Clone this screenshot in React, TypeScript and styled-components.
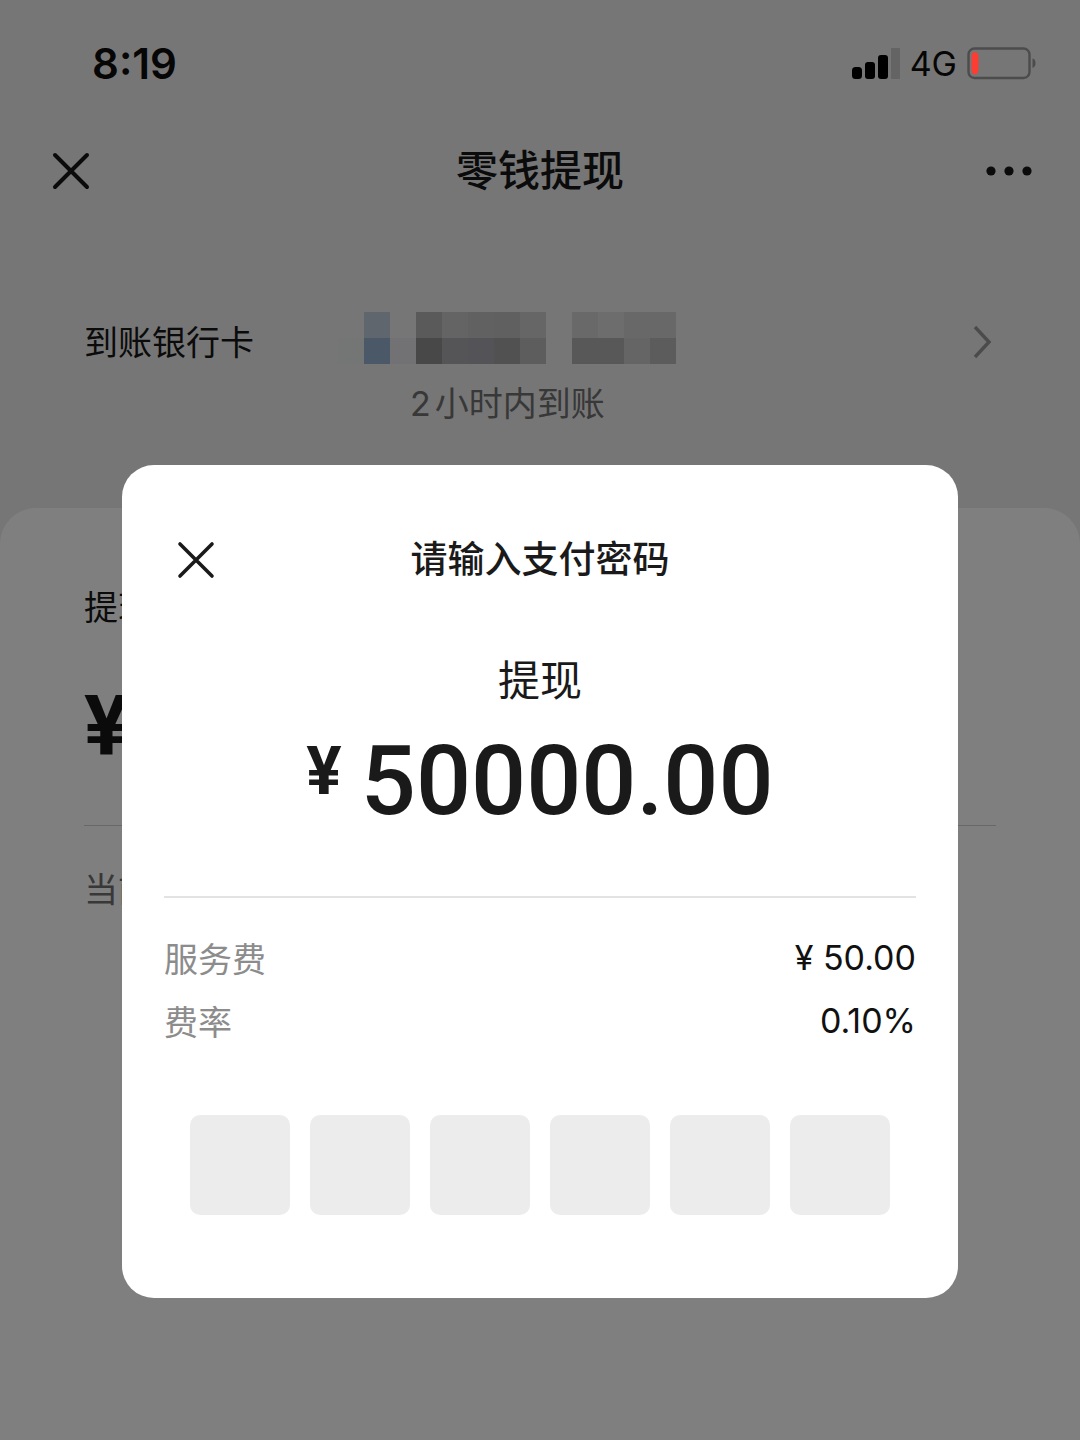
import React from "react";
import styled, { createGlobalStyle } from "styled-components";

const uiFont = `Inter, "Noto Sans CJK SC", sans-serif`;
const numberFont = `Roboto, "Noto Sans CJK SC", sans-serif`;

const GlobalStyle = createGlobalStyle`
  *, *::before, *::after { box-sizing: border-box; }
  body { margin: 0; background: #ededed; }
`;

const Page = styled.div`
  position: relative;
  display: flex;
  flex-direction: column;
  min-height: 100vh;
  background: #ededed;
  color: #161616;
  font-family: ${uiFont};
  font-size: 34px;
  line-height: 60px;
`;

/* The status bar belongs to the system and stays above the dimmed page. */
const StatusBar = styled.header`
  position: relative;
  z-index: 2;
  display: flex;
  align-items: center;
  justify-content: space-between;
  height: 128px;
  padding: 0 44px 0 92px;
  color: #060606;
`;

const Clock = styled.time`
  font-size: 42px;
  font-weight: 600;
`;

const StatusIcons = styled.div`
  display: flex;
  align-items: center;
  gap: 10px;
`;

const NavBar = styled.nav`
  display: grid;
  grid-template-columns: 60px 1fr 60px;
  align-items: center;
  height: 86px;
  padding: 0 41px;
`;

const IconButton = styled.button`
  display: grid;
  place-items: center;
  width: 60px;
  height: 60px;
  padding: 0;
  border: 0;
  background: none;
  color: inherit;
`;

const NavTitle = styled.h1`
  margin: 0;
  font-size: 42px;
  font-weight: 500;
  text-align: center;
`;

const BankSection = styled.section`
  display: grid;
  grid-template-columns: 254px 1fr 60px;
  padding: 98px 68px 0 84px;
  height: 294px;
`;

const BankLabel = styled.span`
  line-height: 62px;
`;

const Mosaic = styled.div`
  display: grid;
  grid-template-columns: repeat(13, 26px);
  grid-auto-rows: 26px;
`;

const MosaicCell = styled.span<{ $tone: string }>`
  background: ${(p) => p.$tone};
`;

const ArrivalTime = styled.p`
  display: flex;
  gap: 4px;
  margin: 10px 0 0;
  padding-left: 72px;
  color: #707070;
`;

const Sheet = styled.section`
  flex: 1;
  padding: 70px 84px 0;
  border-radius: 36px 36px 0 0;
  background: #fff;
`;

const SheetLabel = styled.p`
  margin: 0;
`;

const SheetAmount = styled.p`
  margin: 39px 0 0;
  padding-bottom: 48px;
  border-bottom: 1px solid #d0d0d0;
  font-family: ${numberFont};
  font-size: 84px;
  font-weight: 700;
  line-height: 100px;
`;

const SheetBalance = styled.p`
  margin: 34px 0 0;
  color: #707070;
`;

const Backdrop = styled.div`
  position: absolute;
  inset: 0;
  z-index: 1;
  padding: 465px 122px 0;
  background: rgba(0, 0, 0, 0.5);
`;

const Dialog = styled.div`
  padding: 64px 42px 83px;
  border-radius: 32px;
  background: #fff;
  color: #1a1a1a;
`;

const DialogHeader = styled.div`
  display: grid;
  grid-template-columns: 60px 1fr 60px;
  align-items: center;
  padding: 0 2px;
`;

const DialogTitle = styled.h2`
  margin: 0;
  font-size: 37px;
  font-weight: 500;
  line-height: 62px;
  text-align: center;
`;

const Purpose = styled.p`
  margin: 60px 0 0;
  font-size: 42px;
  text-align: center;
`;

const Amount = styled.p`
  display: flex;
  align-items: flex-start;
  justify-content: center;
  gap: 19px;
  margin: 20px 0 0;
  padding-bottom: 65px;
  border-bottom: 2px solid #e3e3e3;
  font-family: ${numberFont};
  font-size: 97px;
  font-weight: 500;
  line-height: 100px;
`;

const Currency = styled.span`
  font-size: 66px;
  font-weight: 700;
  line-height: 82px;
`;

const FeeList = styled.dl`
  margin: 30px 0 0;
`;

const FeeRow = styled.div`
  display: flex;
  justify-content: space-between;
  line-height: 63px;
`;

const FeeName = styled.dt`
  color: #8c8c8c;
`;

const FeeValue = styled.dd`
  margin: 0;
  color: #111;
  line-height: 60px;
`;

const PinFields = styled.div`
  display: grid;
  grid-template-columns: repeat(6, 1fr);
  gap: 20px;
  margin: 61px 26px 0;
`;

const PinInput = styled.input`
  width: 100%;
  aspect-ratio: 1;
  padding: 0;
  border: 0;
  border-radius: 10px;
  background: #ececec;
  font-size: 42px;
  text-align: center;
`;

const mosaicTones = [
  "transparent", "#c0ccda", "transparent", "#b4b4b4", "#c8c8c8", "#c2c2c2", "#c0c0c0", "#cccccc", "transparent", "#d2d2d2", "#dadada", "#d0d0d0", "#d0d0d0",
  "#e8ecea", "#96b0d0", "#e4e4e8", "#909090", "#aaaaae", "#a8a8b0", "#a2a2a2", "#bababa", "transparent", "#b0b0b0", "#b0b0b0", "#cacaca", "#b8b8b8",
];

const CloseIcon = ({ width = 4 }: { width?: number }) => (
  <svg width="38" height="38" viewBox="0 0 38 38" fill="none" stroke="currentColor" strokeWidth={width} strokeLinecap="round" aria-hidden="true">
    <path d="M3 3 35 35M35 3 3 35" />
  </svg>
);

const SignalIcon = () => (
  <svg width="48" height="32" viewBox="0 0 48 32" aria-hidden="true">
    <rect x="0" y="19" width="10" height="12" rx="3.5" />
    <rect x="13" y="14" width="10" height="17" rx="3" />
    <rect x="26" y="7" width="10" height="24" rx="3" />
    <rect x="39" y="0" width="9" height="31" rx="1" fill="#646464" />
  </svg>
);

const BatteryIcon = () => (
  <svg width="69" height="34" viewBox="0 0 69 34" aria-hidden="true">
    <rect x="1.5" y="1.5" width="61" height="29.5" rx="6" fill="none" stroke="#4c4c4c" strokeWidth="2.4" />
    <path d="M8 5Q11.500 5 11.500 11V21Q11.500 27.500 8 27.500Q4.500 27.500 4.500 22V10Q4.500 5 8 5Z" fill="#fb3d33" />
    <path d="M65.500 11.500Q68.500 12 68.500 16T65.500 21Z" fill="#4c4c4c" />
  </svg>
);

const fees = [
  { name: "服务费", value: "¥ 50.00" },
  { name: "费率", value: "0.10%" },
];

export default function App() {
  return (
    <>
      <GlobalStyle />
      <Page>
        <StatusBar>
          <Clock>8:19</Clock>
          <StatusIcons>
            <SignalIcon />
            <span>4G</span>
            <BatteryIcon />
          </StatusIcons>
        </StatusBar>

        <NavBar>
          <IconButton type="button" aria-label="关闭">
            <CloseIcon />
          </IconButton>
          <NavTitle>零钱提现</NavTitle>
          <IconButton type="button" aria-label="更多">
            <svg width="46" height="10" viewBox="0 0 46 10" fill="currentColor" aria-hidden="true">
              <circle cx="5" cy="5" r="4.6" />
              <circle cx="23" cy="5" r="4.6" />
              <circle cx="41" cy="5" r="4.6" />
            </svg>
          </IconButton>
        </NavBar>

        <BankSection>
          <BankLabel>到账银行卡</BankLabel>
          <div>
            <Mosaic aria-hidden="true">
              {mosaicTones.map((tone, i) => (
                <MosaicCell key={i} $tone={tone} />
              ))}
            </Mosaic>
            <ArrivalTime>
              <span>2</span>
              <span>小时内到账</span>
            </ArrivalTime>
          </div>
          <IconButton type="button" aria-label="选择银行卡">
            <svg width="20" height="34" viewBox="0 0 20 34" fill="none" stroke="#969696" strokeWidth="3.4" aria-hidden="true">
              <path d="M3 2 17 17 3 32" />
            </svg>
          </IconButton>
        </BankSection>

        <Sheet>
          <SheetLabel>提现</SheetLabel>
          <SheetAmount>¥</SheetAmount>
          <SheetBalance>当前</SheetBalance>
        </Sheet>

        <Backdrop>
          <Dialog role="dialog" aria-modal="true" aria-labelledby="pay-title">
            <DialogHeader>
              <IconButton type="button" aria-label="关闭">
                <CloseIcon width={3.6} />
              </IconButton>
              <DialogTitle id="pay-title">请输入支付密码</DialogTitle>
            </DialogHeader>
            <Purpose>提现</Purpose>
            <Amount>
              <Currency>¥</Currency>
              <span>50000.00</span>
            </Amount>
            <FeeList>
              {fees.map((fee) => (
                <FeeRow key={fee.name}>
                  <FeeName>{fee.name}</FeeName>
                  <FeeValue>{fee.value}</FeeValue>
                </FeeRow>
              ))}
            </FeeList>
            <PinFields>
              {[1, 2, 3, 4, 5, 6].map((n) => (
                <PinInput key={n} type="password" inputMode="numeric" maxLength={1} aria-label={`密码第${n}位`} />
              ))}
            </PinFields>
          </Dialog>
        </Backdrop>
      </Page>
    </>
  );
}
